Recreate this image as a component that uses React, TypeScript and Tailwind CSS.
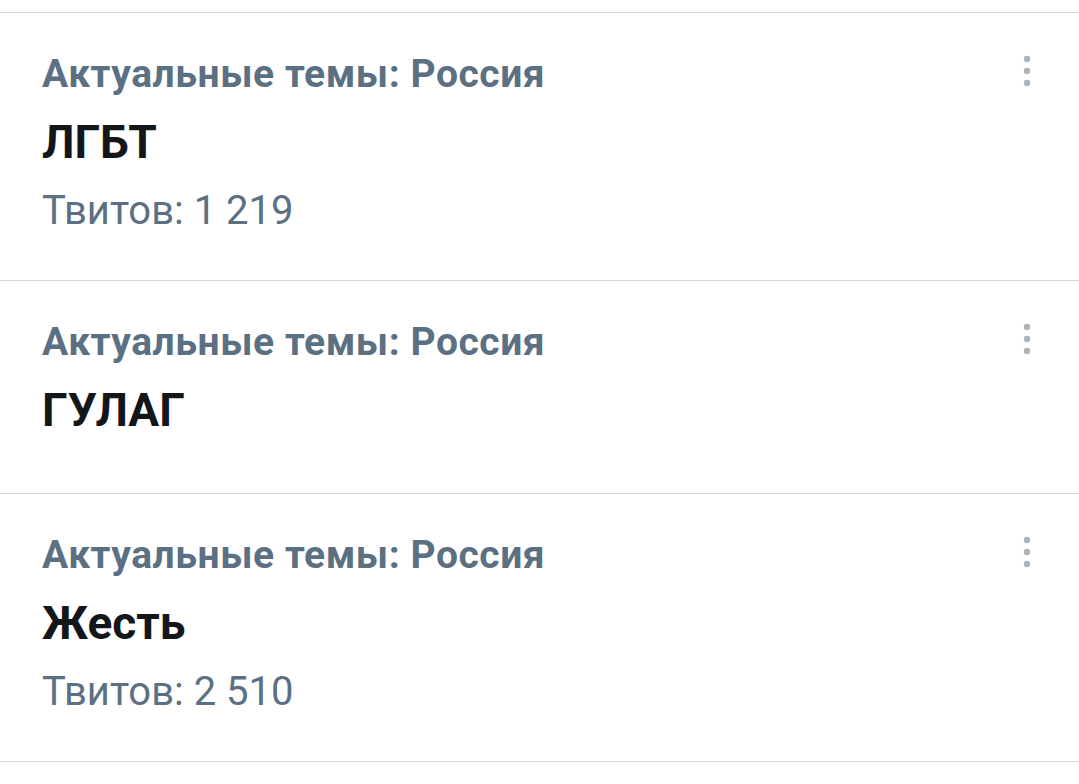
import React from "react";

type Trend = {
  id: string;
  context: string;
  name: string;
  count?: string;
};

const trends: Trend[] = [
  { id: "1", context: "Актуальные темы: Россия", name: "ЛГБТ", count: "Твитов: 1 219" },
  { id: "2", context: "Актуальные темы: Россия", name: "ГУЛАГ" },
  { id: "3", context: "Актуальные темы: Россия", name: "Жесть", count: "Твитов: 2 510" },
];

const MoreIcon: React.FC = () => (
  <svg width="12" height="36" viewBox="0 0 12 36" className="text-[#aab4bc]" fill="currentColor">
    <circle cx="6" cy="6" r="3.2" />
    <circle cx="6" cy="18" r="3.2" />
    <circle cx="6" cy="30" r="3.2" />
  </svg>
);

const TrendRow: React.FC<{ trend: Trend }> = ({ trend }) => (
  <div
    className={
      "flex justify-between border-b border-[#cfd8dc] pl-[42px] pr-[46px] pt-[37px] " +
      (trend.count ? "pb-[45px]" : "pb-[55px]")
    }
  >
    <div className="flex flex-col">
      <span className="text-[39px] leading-[48px] font-bold text-[#5b7083] tracking-[0.55px]">
        {trend.context}
      </span>
      <span className="mt-[17px] text-[46px] leading-[55px] font-bold text-[#14171a]">
        {trend.name}
      </span>
      {trend.count && (
        <span className="mt-[17px] text-[40px] leading-[48px] text-[#5b7083]">
          {trend.count}
        </span>
      )}
    </div>
    <div className="pt-[3px]">
      <MoreIcon />
    </div>
  </div>
);

export default function App() {
  return (
    <div
      className="w-[1079px] h-[784px] bg-white overflow-hidden pt-[12px]"
      style={{ fontFamily: "Roboto, 'Noto Sans', sans-serif" }}
    >
      <div className="border-t border-[#cfd8dc]">
        {trends.map((t) => (
          <TrendRow key={t.id} trend={t} />
        ))}
      </div>
    </div>
  );
}
